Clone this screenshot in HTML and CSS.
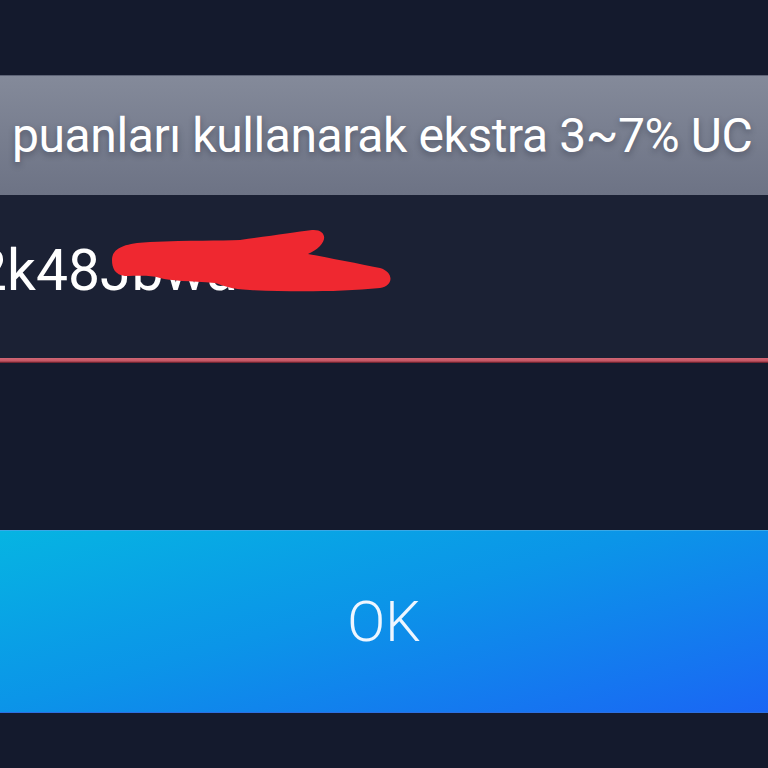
FILE: index.html
```html
<!DOCTYPE html>
<html>
<head>
<meta charset="utf-8">
<link rel="stylesheet" href="styles.css">
</head>
<body>
<div class="screen">
  <div class="top"></div>
  <div class="banner"><span class="banner-text">puanları kullanarak ekstra 3~7% UC</span></div>
  <div class="field">
    <span class="code">2k48Jbwa</span>
    <svg class="scribble" width="300" height="80" viewBox="0 0 300 80">
      <path d="M12,40 C12,26 30,23 50,22 C90,20 120,21 140,20 C170,16 195,12 212,10 C224,9 228,18 220,26 C216,30 212,32 208,34 C230,38 260,44 280,48 C294,52 294,66 280,68 C240,72 190,72 150,70 C130,69 125,66 115,63 C90,61 70,61 60,58 C50,55 40,56 25,56 C15,55 12,48 12,40 Z" fill="#ef2830"/>
    </svg>
  </div>
  <div class="underline"></div>
  <div class="gap"></div>
  <div class="ok">OK</div>
  <div class="bottom"></div>
</div>
</body>
</html>
```
FILE: styles.css
```css
html, body {
  margin: 0;
  padding: 0;
  background: #141a2d;
}
.screen {
  width: 768px;
  height: 768px;
  overflow: hidden;
  display: flex;
  flex-direction: column;
  font-family: Roboto, "Noto Sans", sans-serif;
  color: #fff;
}
.top {
  height: 75px;
  background: #141a2d;
  flex: none;
}
.banner {
  height: 120px;
  flex: none;
  background: linear-gradient(180deg, #848a9a 0%, #787e8f 50%, #6d7385 100%);
  display: flex;
  align-items: center;
  padding-left: 12px;
  white-space: nowrap;
  border-top: 1px solid #5d6376;
  box-sizing: border-box;
}
.banner-text {
  font-size: 48px;
  font-weight: 400;
  letter-spacing: -0.4px;
  text-shadow: 0 3px 6px rgba(40, 45, 60, 0.45);
}
.field {
  height: 163px;
  flex: none;
  background: #1b2134;
  position: relative;
  display: flex;
  align-items: center;
  padding-bottom: 12px;
  box-sizing: border-box;
}
.code {
  font-size: 57px;
  margin-left: -25px;
  letter-spacing: 0;
}
.scribble {
  position: absolute;
  left: 100px;
  top: 25px;
}
.underline {
  height: 5px;
  flex: none;
  background: linear-gradient(180deg, #d06775 0%, #c65664 60%, #5a1522 100%);
}
.gap {
  height: 167px;
  flex: none;
  background: #141a2d;
}
.ok {
  height: 183px;
  flex: none;
  background: linear-gradient(165deg, #06b4e2 0%, #0b95e8 45%, #1a66f4 100%);
  display: flex;
  align-items: center;
  justify-content: center;
  font-size: 56px;
  font-weight: 300;
  color: #eef6ff;
  box-sizing: border-box;
  border-top: 1px solid #3aa8e6;
  border-bottom: 1px solid #2c6fe0;
}
.bottom {
  flex: 1;
  background: #141a2d;
}
```
